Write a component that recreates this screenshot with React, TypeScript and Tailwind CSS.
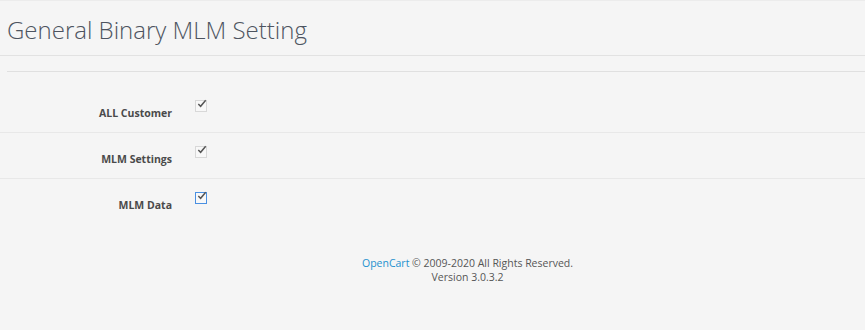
import React from "react";

function Check({ focused }: { focused?: boolean }) {
  return (
    <span
      className={`relative inline-block w-[12px] h-[12px] border ${focused ? "border-[#4a90e2]" : "border-[#d8d8d8]"} bg-[#f8f8f8]`}
    >
      <svg viewBox="0 0 13 13" className="absolute left-[0px] top-[-3px] w-[12px] h-[12px]">
        <path d="M2.5 6.5 L5 9 L10.5 2.5" fill="none" stroke="#555" strokeWidth="1.6" />
      </svg>
    </span>
  );
}

export default function App() {
  const rows = [
    { label: "ALL Customer", focused: false },
    { label: "MLM Settings", focused: false },
    { label: "MLM Data", focused: true },
  ];
  return (
    <div className="w-[865px] h-[330px] bg-[#f5f5f5] font-['Open_Sans',sans-serif] text-[#666] border-t border-[#ececec]">
      <div className="h-[55px] border-b border-[#e2e2e2] flex items-center pl-[7px]">
        <h1 className="text-[24px] font-light text-[#4d5460] leading-none mt-[4px]">General Binary MLM Setting</h1>
      </div>
      <div className="ml-[7px] mt-[15px] border-t border-[#e0e0e0]" />
      <div className="mt-[15px]">
        {rows.map((r, i) => (
          <div
            key={r.label}
            className={`flex h-[46px] ${i < rows.length - 1 ? "border-b border-[#e8e8e8]" : ""}`}
          >
            <div className="w-[172px] text-right text-[10.5px] font-bold text-[#4a4a4a] pt-[19px]">{r.label}</div>
            <div className="pl-[23px] pt-[7px]">
              <Check focused={r.focused} />
            </div>
          </div>
        ))}
      </div>
      <div className="mt-[31px] pl-[70px] text-center text-[10.5px] leading-[14px] text-[#555]">
        <div>
          <span className="text-[#1e91cf]">OpenCart</span> © 2009-2020 All Rights Reserved.
        </div>
        <div>Version 3.0.3.2</div>
      </div>
    </div>
  );
}
